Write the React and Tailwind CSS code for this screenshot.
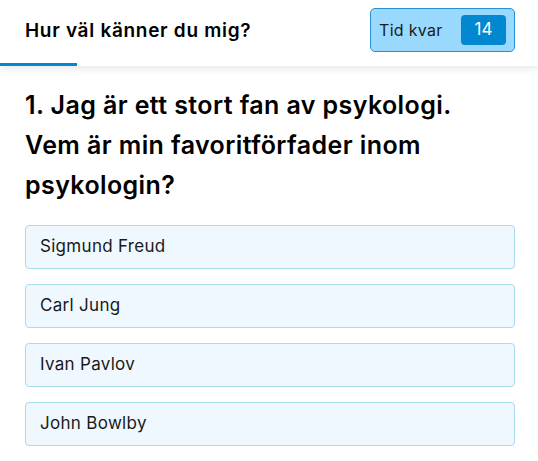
export default function App() {
  const options = ["Sigmund Freud", "Carl Jung", "Ivan Pavlov", "John Bowlby"];
  return (
    <div className="w-[538px] h-[461px] bg-white overflow-hidden" style={{ fontFamily: "Inter, 'Noto Sans', sans-serif" }}>
      <div className="relative h-[66px] flex items-center justify-between pl-[25px] pr-[23px] shadow-[0_3px_8px_rgba(0,0,0,0.09)]">
        <div className="text-[19px] font-semibold text-black tracking-[0.7px] mt-[-3px]">Hur väl känner du mig?</div>
        <div className="flex items-center h-[44px] w-[145px] rounded-[5px] border border-[#2b8fd8] bg-[#99d9fe] pl-[8px] pr-[8px] justify-between mt-[-6px]">
          <span className="text-[16px] text-[#1a1a1a] tracking-[0.3px]">Tid kvar</span>
          <span className="w-[45px] h-[30px] rounded-[4px] bg-[#0288d1] text-white text-[17px] flex items-center justify-center">14</span>
        </div>
        <div className="absolute left-0 bottom-0 w-[77px] h-[3px] bg-[#0288d1]" />
      </div>
      <div className="pl-[25px] pr-[23px] pt-[19px]">
        <h1 className="max-w-[470px] text-[25px] leading-[40px] font-semibold text-black tracking-[0.4px]">
          1. Jag är ett stort fan av psykologi. Vem är min favoritförfader inom psykologin?
        </h1>
        <div className="mt-[20px] flex flex-col gap-[15px]">
          {options.map((o) => (
            <div key={o} className="h-[44px] flex items-center px-[14px] rounded-[4px] border border-[#a9dcec] bg-[#eff8ff] text-[17px] tracking-[0.3px] text-[#1a1a1a]">
              {o}
            </div>
          ))}
        </div>
      </div>
    </div>
  );
}
